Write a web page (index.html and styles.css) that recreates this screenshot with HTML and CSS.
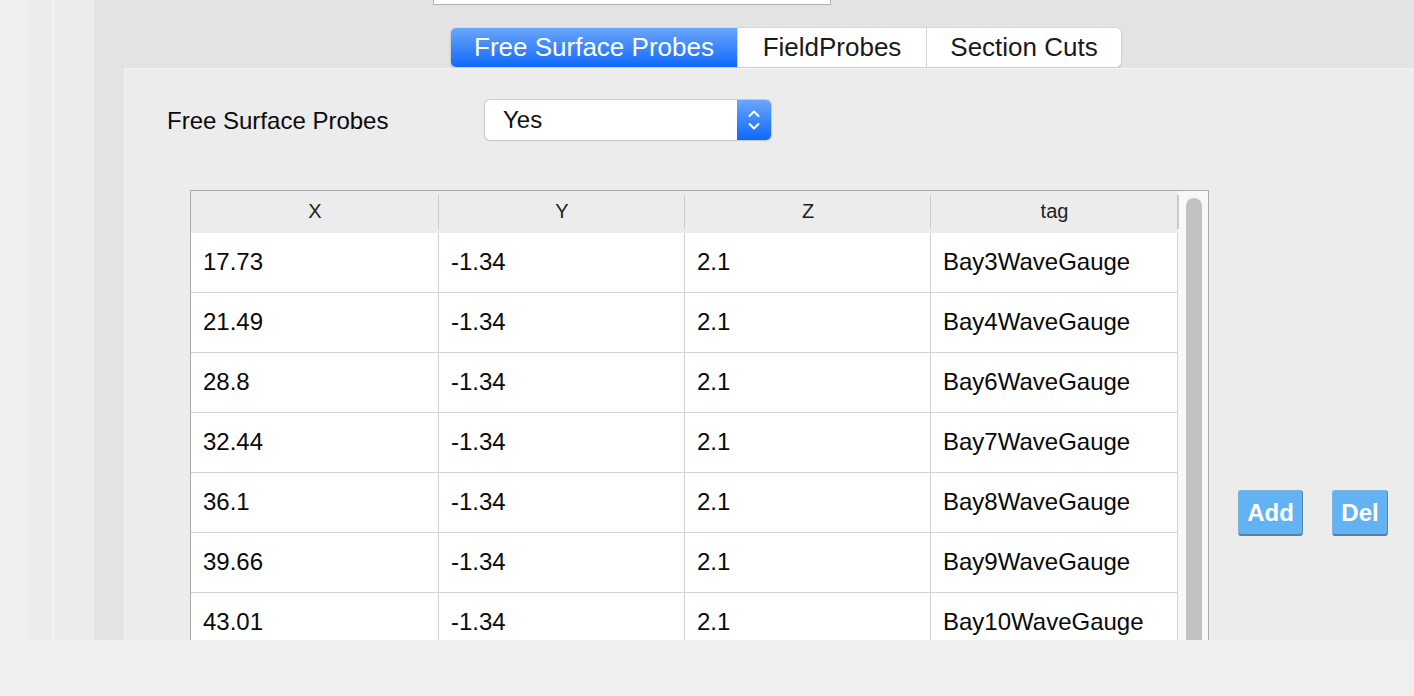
FILE: index.html
```html
<!DOCTYPE html>
<html>
<head>
<meta charset="utf-8">
<link rel="stylesheet" href="styles.css">
</head>
<body>
<div class="window">
  <div class="strip strip-a"></div>
  <div class="strip strip-b"></div>
  <div class="strip strip-line"></div>
  <div class="strip strip-c"></div>
  <div class="main">
    <div class="topfield"></div>
    <div class="tabs">
      <div class="tab active">Free Surface Probes</div>
      <div class="tab">FieldProbes</div>
      <div class="tab">Section Cuts</div>
    </div>
    <div class="panel">
      <div class="form-row">
        <div class="label">Free Surface Probes</div>
        <div class="combo">
          <span class="combo-text">Yes</span>
          <span class="combo-arrow">
            <svg width="14" height="24" viewBox="0 0 14 24"><path d="M2.5 8 L7 3.5 L11.5 8" fill="none" stroke="#fff" stroke-width="2" stroke-linecap="round" stroke-linejoin="round"/><path d="M2.5 16 L7 20.5 L11.5 16" fill="none" stroke="#fff" stroke-width="2" stroke-linecap="round" stroke-linejoin="round"/></svg>
          </span>
        </div>
      </div>
      <div class="table-row">
        <div class="table">
          <div class="grid">
            <div class="th">X</div>
            <div class="th">Y</div>
            <div class="th">Z</div>
            <div class="th">tag</div>

            <div class="td">17.73</div><div class="td">-1.34</div><div class="td">2.1</div><div class="td">Bay3WaveGauge</div>
            <div class="td">21.49</div><div class="td">-1.34</div><div class="td">2.1</div><div class="td">Bay4WaveGauge</div>
            <div class="td">28.8</div><div class="td">-1.34</div><div class="td">2.1</div><div class="td">Bay6WaveGauge</div>
            <div class="td">32.44</div><div class="td">-1.34</div><div class="td">2.1</div><div class="td">Bay7WaveGauge</div>
            <div class="td">36.1</div><div class="td">-1.34</div><div class="td">2.1</div><div class="td">Bay8WaveGauge</div>
            <div class="td">39.66</div><div class="td">-1.34</div><div class="td">2.1</div><div class="td">Bay9WaveGauge</div>
            <div class="td">43.01</div><div class="td">-1.34</div><div class="td">2.1</div><div class="td">Bay10WaveGauge</div>
          </div>
          <div class="scrollbar"><div class="thumb"></div></div>
        </div>
        <div class="buttons">
          <button class="btn">Add</button>
          <button class="btn">Del</button>
        </div>
      </div>
    </div>
  </div>
</div>
</body>
</html>
```

FILE: styles.css
```css
* { box-sizing: border-box; }
html, body { margin: 0; padding: 0; }
body {
  background: #efefef;
  width: 1414px;
  height: 696px;
  overflow: hidden;
  font-family: "Liberation Sans", Arial, sans-serif;
  color: #111;
}
.window {
  display: flex;
  height: 640px;
  overflow: hidden;
}
.strip { flex: none; height: 100%; }
.strip-a { width: 28px; background: #efefef; }
.strip-b { width: 25px; background: #ececec; }
.strip-line { width: 1px; background: #f6f6f6; }
.strip-c { width: 40px; background: #ececec; }
.main {
  flex: 1;
  background: #e3e3e3;
  display: flex;
  flex-direction: column;
  min-width: 0;
}
.topfield {
  margin-left: 339px;
  width: 398px;
  height: 5px;
  background: #fff;
  border: 1px solid #b3b3b3;
  border-top: none;
  flex: none;
}
.tabs {
  flex: none;
  margin-top: 22px;
  margin-left: 356px;
  display: flex;
  height: 41px;
  border-radius: 6px;
  background: #fff;
  border: 1px solid #cfcfcf;
  border-top-color: #d8d8d8;
  box-shadow: 0 1px 1px rgba(0,0,0,0.12);
  width: 672px;
  overflow: hidden;
}
.tab {
  display: flex;
  align-items: center;
  justify-content: center;
  font-size: 26px;
  color: #1a1a1a;
  border-left: 1px solid #d6d6d6;
  padding-bottom: 1px;
}
.tab:nth-child(1) { width: 286px; border-left: none; }
.tab:nth-child(2) { width: 189px; }
.tab:nth-child(3) { width: 195px; }
.tab.active {
  color: #fff;
  background: linear-gradient(#6aa6fc, #0f68fb);
}
.panel {
  flex: 1;
  margin-left: 30px;
  background: #ececec;
  border-top: 1px solid #f4f4f4;
  border-left: 1px solid #f2f2f2;
  padding: 31px 0 0 42px;
}
.form-row {
  display: flex;
  align-items: center;
  height: 40px;
}
.label {
  width: 318px;
  font-size: 24px;
  color: #0a0a0a;
  padding-top: 1px;
}
.combo {
  width: 286px;
  height: 40px;
  background: #fff;
  border-radius: 5px;
  box-shadow: 0 0 0 1px #c9c9c9, 0 1px 1px rgba(0,0,0,0.18);
  display: flex;
  align-items: center;
  overflow: hidden;
}
.combo-text {
  flex: 1;
  font-size: 24px;
  padding-left: 18px;
  color: #111;
}
.combo-arrow {
  width: 34px;
  height: 40px;
  background: linear-gradient(#6aa6fc, #0f68fb);
  display: flex;
  align-items: center;
  justify-content: center;
}
.table-row {
  display: flex;
  margin-top: 50px;
  margin-left: 23px;
}
.table {
  flex: none;
  display: flex;
  width: 1019px;
  height: 460px;
  border: 1px solid #a9a9a9;
  border-bottom: none;
  background: #fff;
}
.grid {
  display: grid;
  grid-template-columns: 248px 246px 246px 247px;
  grid-auto-rows: 60px;
  grid-template-rows: 42px;
  align-content: start;
}
.th {
  background: #ececec;
  font-size: 20px;
  color: #222;
  display: flex;
  align-items: center;
  justify-content: center;
  position: relative;
  padding-bottom: 2px;
}
.th::after {
  content: "";
  position: absolute;
  right: -1px;
  top: 4px;
  bottom: 4px;
  width: 2px;
  background: #cbcbcb;
}
.td {
  font-size: 24px;
  color: #0a0a0a;
  display: flex;
  align-items: center;
  padding-left: 12px;
  border-right: 1px solid #d2d2d2;
  border-bottom: 1px solid #d2d2d2;
  padding-bottom: 1px;
}
.scrollbar {
  flex: 1;
  background: #f8f8f8;
  padding: 7px 5px 0 8px;
}
.thumb {
  width: 16px;
  height: 600px;
  background: #c2c2c2;
  border-radius: 8px;
}
.buttons {
  display: flex;
  gap: 29px;
  margin-left: 29px;
  margin-top: 300px;
  align-items: flex-start;
}
.btn {
  font-family: "Liberation Sans", Arial, sans-serif;
  font-weight: bold;
  font-size: 24px;
  color: #fff;
  background: #63b3f4;
  border: 1px solid #7fb3d8;
  border-right-color: #5a87aa;
  border-bottom: 2px solid #5b7f9c;
  border-radius: 3px;
  height: 46px;
  padding: 0 6px;
  display: flex;
  align-items: center;
  justify-content: center;
}
.btn:nth-child(1) { width: 65px; }
.btn:nth-child(2) { width: 56px; }
```
